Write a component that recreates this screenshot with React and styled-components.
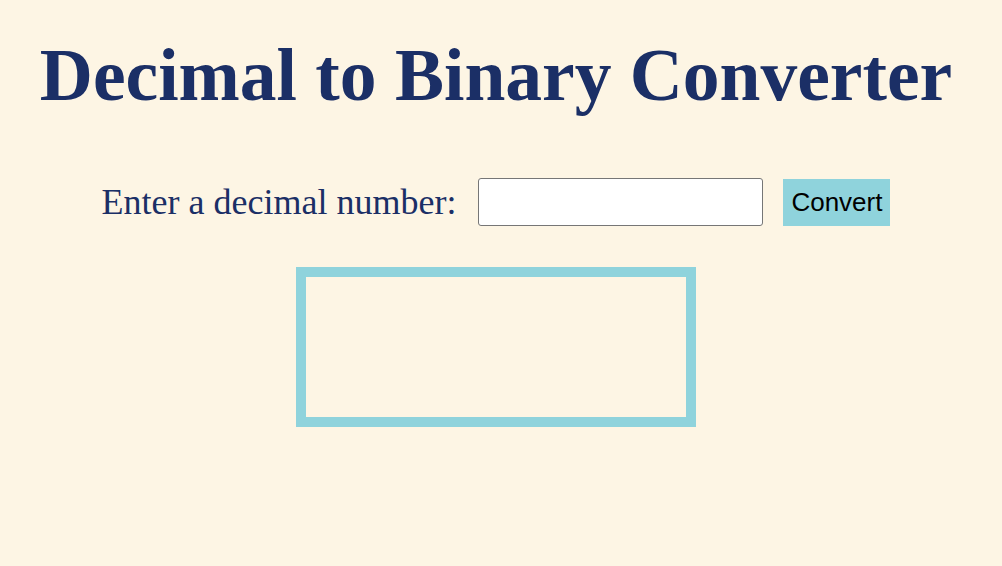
import React, { useState } from 'react'
import styled, { createGlobalStyle } from 'styled-components'

const GlobalStyle = createGlobalStyle`
  html, body {
    margin: 0;
    padding: 0;
    background: #fdf5e4;
  }
`;

const Page = styled.main`
  display: flex;
  flex-direction: column;
  align-items: center;
  padding: 0 10px 0 0;
  min-height: 566px;
  box-sizing: border-box;
`;

const Title = styled.h1`
  margin: 36px 0 0;
  font-family: "Liberation Serif", "Times New Roman", serif;
  font-weight: bold;
  font-size: 73.5px;
  line-height: 80px;
  color: #1b2f66;
`;

const Form = styled.div`
  display: flex;
  align-items: center;
  margin-top: 62px;
`;

const Label = styled.label`
  font-family: "Liberation Serif", "Times New Roman", serif;
  font-size: 36px;
  color: #1b2f66;
  margin-right: 22px;
`;

const NumberInput = styled.input`
  width: 285px;
  height: 48px;
  box-sizing: border-box;
  border: 1px solid #767676;
  border-radius: 3px;
  background: #fff;
  font-size: 24px;
  padding: 0 8px;
  margin-right: 20px;
`;

const ConvertButton = styled.button`
  height: 47px;
  padding: 0 8px;
  border: none;
  background: #8fd3dc;
  font-family: "Liberation Sans", Arial, sans-serif;
  font-size: 26px;
  color: #000;
  cursor: pointer;
`;

const Result = styled.div`
  margin-top: 41px;
  width: 380px;
  height: 140px;
  border: 10px solid #8fd3dc;
  font-family: "Liberation Serif", "Times New Roman", serif;
  font-size: 32px;
  color: #1b2f66;
  display: flex;
  align-items: center;
  justify-content: center;
`;

const App = () => {
  const [value, setValue] = useState('')
  const [result, setResult] = useState('')

  const convert = () => {
    const n = parseInt(value, 10)
    setResult(isNaN(n) ? '' : n.toString(2))
  }

  return (
    <Page>
      <GlobalStyle />
      <Title>Decimal to Binary Converter</Title>
      <Form>
        <Label htmlFor="decimal">Enter a decimal number:</Label>
        <NumberInput id="decimal" type="number" value={value} onChange={(e) => setValue(e.target.value)} />
        <ConvertButton onClick={convert}>Convert</ConvertButton>
      </Form>
      <Result>{result}</Result>
    </Page>
  )
}

export default App
